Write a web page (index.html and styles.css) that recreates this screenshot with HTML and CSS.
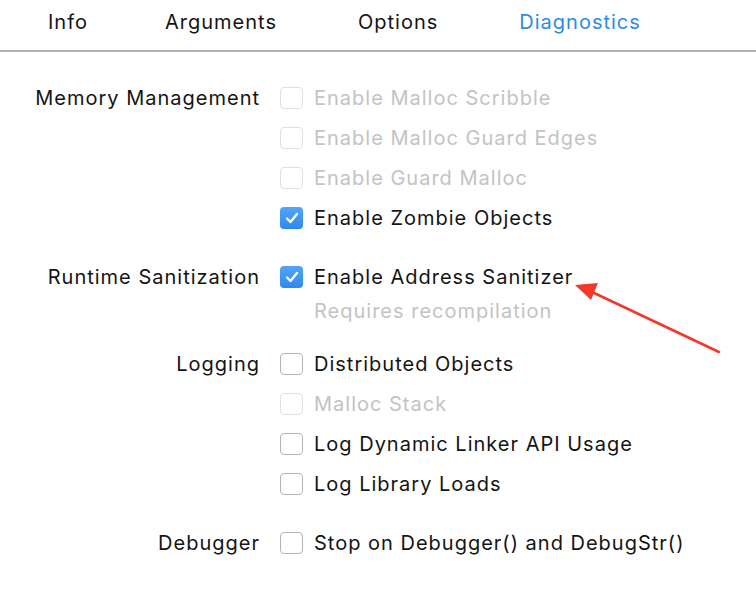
FILE: index.html
```html
<!DOCTYPE html>
<html>
<head>
<meta charset="utf-8">
<link rel="stylesheet" href="styles.css">
</head>
<body>
<div class="page">
  <nav class="tabs">
    <span class="tab">Info</span>
    <span class="tab">Arguments</span>
    <span class="tab">Options</span>
    <span class="tab active">Diagnostics</span>
  </nav>
  <div class="content">
    <section class="group">
      <div class="label">Memory Management</div>
      <div class="opts">
        <div class="opt disabled"><span class="box"></span><span class="text">Enable Malloc Scribble</span></div>
        <div class="opt disabled"><span class="box"></span><span class="text">Enable Malloc Guard Edges</span></div>
        <div class="opt disabled"><span class="box"></span><span class="text">Enable Guard Malloc</span></div>
        <div class="opt"><span class="box checked"><svg viewBox="0 0 22 22" width="22" height="22"><path d="M6 11.5 L9.5 15 L16 7" fill="none" stroke="#fff" stroke-width="2.4" stroke-linecap="round" stroke-linejoin="round"/></svg></span><span class="text">Enable Zombie Objects</span></div>
      </div>
    </section>
    <section class="group">
      <div class="label">Runtime Sanitization</div>
      <div class="opts">
        <div class="opt"><span class="box checked"><svg viewBox="0 0 22 22" width="22" height="22"><path d="M6 11.5 L9.5 15 L16 7" fill="none" stroke="#fff" stroke-width="2.4" stroke-linecap="round" stroke-linejoin="round"/></svg></span><span class="text">Enable Address Sanitizer</span></div>
        <div class="note">Requires recompilation</div>
      </div>
    </section>
    <section class="group">
      <div class="label">Logging</div>
      <div class="opts">
        <div class="opt"><span class="box"></span><span class="text">Distributed Objects</span></div>
        <div class="opt disabled"><span class="box"></span><span class="text">Malloc Stack</span></div>
        <div class="opt"><span class="box"></span><span class="text">Log Dynamic Linker API Usage</span></div>
        <div class="opt"><span class="box"></span><span class="text">Log Library Loads</span></div>
      </div>
    </section>
    <section class="group">
      <div class="label">Debugger</div>
      <div class="opts">
        <div class="opt"><span class="box"></span><span class="text">Stop on Debugger() and DebugStr()</span></div>
      </div>
    </section>
  </div>
  <svg class="arrow" width="756" height="594" viewBox="0 0 756 594">
    <line x1="719" y1="352" x2="592" y2="292" stroke="#f3392c" stroke-width="2.6" stroke-linecap="round"/>
    <polygon points="575,285 598,283 591,300" fill="#f3392c"/>
  </svg>
</div>
</body>
</html>
```

FILE: styles.css
```css
html, body {
  margin: 0;
  padding: 0;
  background: #ffffff;
}
.page {
  position: relative;
  width: 756px;
  height: 594px;
  overflow: hidden;
  font-family: Inter, "Noto Sans", sans-serif;
  font-size: 20px;
  letter-spacing: 1px;
  color: #141414;
}
.tabs {
  display: flex;
  gap: 81px;
  height: 52px;
  align-items: center;
  padding-left: 48px;
  padding-bottom: 6px;
  box-sizing: border-box;
  border-bottom: 2px solid #b3b3b3;
}
.tab {
  line-height: 24px;
}
.tab:first-child {
  margin-right: -4px;
}
.tab.active {
  color: #2f8be0;
}
.content {
  display: flex;
  flex-direction: column;
  gap: 19px;
  padding-top: 26px;
}
.group {
  display: flex;
}
.label {
  width: 260px;
  text-align: right;
  height: 40px;
  line-height: 40px;
  flex: none;
}
.opts {
  display: flex;
  flex-direction: column;
  padding-left: 20px;
}
.opt {
  display: flex;
  align-items: center;
  height: 40px;
}
.box {
  width: 23px;
  height: 22px;
  border: 1px solid #b4b4b4;
  border-radius: 4px;
  box-sizing: border-box;
  background: #fff;
  margin-right: 11px;
  flex: none;
  display: flex;
  align-items: center;
  justify-content: center;
}
.box svg {
  display: block;
}
.box.checked {
  border: none;
  background: linear-gradient(#52a5f8, #2f88ee);
}
.opt.disabled .box {
  border-color: #e0e0e0;
}
.opt.disabled .text {
  color: #c3c3c3;
}
.note {
  padding-left: 34px;
  height: 28px;
  line-height: 28px;
  color: #c3c3c3;
}
.arrow {
  position: absolute;
  left: 0;
  top: 0;
  pointer-events: none;
}
```
